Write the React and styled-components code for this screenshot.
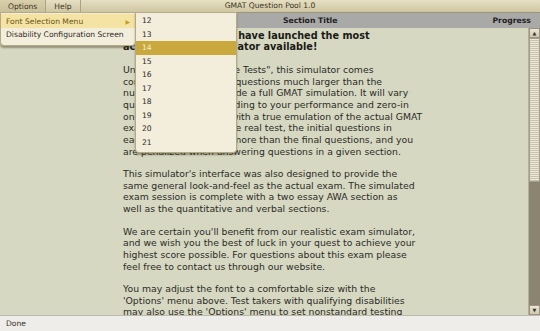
import React from "react";
import styled, { createGlobalStyle } from "styled-components";

const Global = createGlobalStyle`
  html, body { margin: 0; padding: 0; }
  body {
    width: 540px;
    height: 331px;
    overflow: hidden;
    font-family: "DejaVu Sans", sans-serif;
    background: #d6d8c2;
  }
`;

const Frame = styled.div`
  position: relative;
  width: 540px;
  height: 331px;
  display: flex;
  flex-direction: column;
  overflow: hidden;`;

const TopBar = styled.div`
  position: relative;
  height: 12px;
  display: flex;
  align-items: center;
  background: linear-gradient(#e6dfc2, #cfc6a2);
  border-bottom: 1px solid #9c9478;
  font-size: 7.6px;
  color: #3a3626;`;

const MenuItem = styled.div`
  height: 12px;
  display: flex;
  align-items: center;
  padding: 0 ${p => p.pad}px 0 ${p => p.padLeft}px;
  border-right: 1px solid #aaa386;
  background: ${p => (p.open ? "linear-gradient(#d9d0ac, #c9bf98)" : "transparent")};`;

const Title = styled.div`
  position: absolute;
  left: 0;
  right: 0;
  top: 0;
  height: 12px;
  line-height: 12px;
  text-align: center;
  pointer-events: none;`;

const HeaderRow = styled.div`
  height: 15px;
  display: flex;
  align-items: center;
  background: #a9a9a7;
  font-size: 7.7px;
  font-weight: bold;
  color: #1e1e1e;`;

const HeaderCell = styled.div`
  margin-left: ${p => p.left}px;`;

const Body = styled.div`
  flex: 1;
  display: flex;
  min-height: 0;`;

const Content = styled.div`
  flex: 1;
  padding: 2px 0 0 123px;
  color: #2b2b26;
  font-size: 9.3px;
  line-height: 11.65px;
  overflow: hidden;`;

const Heading = styled.div`
  font-size: 9.7px;
  font-weight: bold;
  line-height: 11px;
  color: #1a1a16;
  margin-bottom: 12px;
  white-space: nowrap;`;

const Para = styled.p`
  margin: 0 0 10.9px;
  white-space: nowrap;`;

const Scrollbar = styled.div`
  width: 11px;
  display: flex;
  flex-direction: column;
  background: #8c8470;
  border-left: 1px solid #b5ae98;`;

const ScrollBtn = styled.div`
  height: 10px;
  display: flex;
  align-items: center;
  justify-content: center;
  background: linear-gradient(#ebe6d6, #cfc8b2);
  border: 1px solid #9a9380;
  box-sizing: border-box;
  font-size: 5px;
  color: #3a3626;`;

const Thumb = styled.div`
  height: 144px;
  background: repeating-linear-gradient(#ece8da 0 1px, #c9c2ac 1px 2px);
  border: 1px solid #a49d88;
  box-sizing: border-box;`;

const Track = styled.div`
  flex: 1;`;

const StatusBar = styled.div`
  height: 15px;
  display: flex;
  align-items: center;
  padding-left: 6px;
  background: #efede9;
  border-top: 1px solid #bdb9ad;
  font-size: 7.6px;
  color: #2f2f2a;`;

const Dropdown = styled.div`
  position: absolute;
  left: ${p => p.left}px;
  top: 12px;
  width: ${p => p.width}px;
  padding: 1px 0 ${p => p.padBottom}px;
  background: #f3eedc;
  border: 1px solid #b4aa86;
  box-sizing: border-box;
  border-radius: 0 0 4px 4px;
  box-shadow: 0 2px 2px rgba(70, 60, 30, 0.45);
  font-size: 7.6px;
  color: #2e2a1e;`;

const DropItem = styled.div`
  height: ${p => p.h}px;
  display: flex;
  align-items: center;
  justify-content: space-between;
  padding: 0 5px 0 ${p => p.padLeft}px;
  background: ${p => p.hl === "gold" ? "#c9a83e" : p.hl === "pale" ? "#f4e3a2" : "transparent"};
  color: ${p => p.hl === "gold" ? "#f8eed2" : p.hl === "pale" ? "#6a5418" : "inherit"};`;

const Arrow = styled.span`
  font-size: 6px;
  color: #c89e22;`;

const heading = [
  "We're proud that we have launched the most",
  "accurate GMAT simulator available!",
];

const paragraphs = [
  [
    "Unlike typical \"Adaptable Tests\", this simulator comes",
    "complete with a pool of questions much larger than the",
    "number needed to provide a full GMAT simulation. It will vary",
    "question difficulty according to your performance and zero-in",
    "on your real skill level, with a true emulation of the actual GMAT",
    "exam. And just like in the real test, the initial questions in",
    "each section will count more than the final questions, and you",
    "are penalized when answering questions in a given section.",
  ],
  [
    "This simulator's interface was also designed to provide the",
    "same general look-and-feel as the actual exam. The simulated",
    "exam session is complete with a two essay AWA section as",
    "well as the quantitative and verbal sections.",
  ],
  [
    "We are certain you'll benefit from our realistic exam simulator,",
    "and we wish you the best of luck in your quest to achieve your",
    "highest score possible. For questions about this exam please",
    "feel free to contact us through our website.",
  ],
  [
    "You may adjust the font to a comfortable size with the",
    "'Options' menu above. Test takers with qualifying disabilities",
    "may also use the 'Options' menu to set nonstandard testing",
    "conditions for the exam.",
  ],
];

const sizes = [12, 13, 14, 15, 16, 17, 18, 19, 20, 21];

function Lines({ lines }) {
  return lines.map((l, i) => (
    <React.Fragment key={i}>
      {l}
      {i < lines.length - 1 && <br />}
    </React.Fragment>
  ));
}

export default function App() {
  return (
    <Frame>
      <Global />
      <TopBar>
        <MenuItem padLeft={8} pad={8} open>Options</MenuItem>
        <MenuItem padLeft={8} pad={8}>Help</MenuItem>
        <Title>GMAT Question Pool 1.0</Title>
      </TopBar>
      <HeaderRow>
        <HeaderCell left={283}>Section Title</HeaderCell>
        <HeaderCell left={155}>Progress</HeaderCell>
      </HeaderRow>
      <Body>
        <Content>
          <Heading><Lines lines={heading} /></Heading>
          {paragraphs.map((p, i) => (
            <Para key={i}><Lines lines={p} /></Para>
          ))}
        </Content>
        <Scrollbar>
          <ScrollBtn>▲</ScrollBtn>
          <Thumb />
          <Track />
          <ScrollBtn>▼</ScrollBtn>
        </Scrollbar>
      </Body>
      <StatusBar>Done</StatusBar>

      <Dropdown left={0} width={136} padBottom={4}>
        <DropItem h={14} padLeft={5} hl="pale">
          Font Selection Menu <Arrow>▶</Arrow>
        </DropItem>
        <DropItem h={13} padLeft={5}>Disability Configuration Screen</DropItem>
      </Dropdown>
      <Dropdown left={135} width={102} padBottom={3}>
        {sizes.map(s => (
          <DropItem key={s} h={13.5} padLeft={6} hl={s === 14 ? "gold" : undefined}>
            {s}
          </DropItem>
        ))}
      </Dropdown>
    </Frame>
  );
}
